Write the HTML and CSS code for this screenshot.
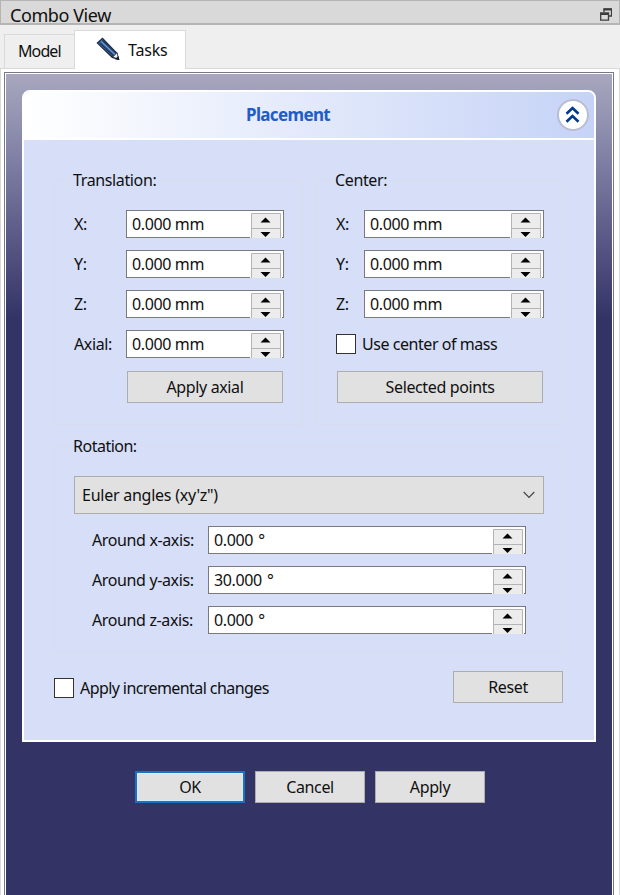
FILE: index.html
```html
<!DOCTYPE html>
<html lang="en">
<head>
<meta charset="utf-8">
<title>Combo View</title>
<link rel="stylesheet" href="styles.css">
</head>
<body>
<svg width="0" height="0" class="defs">
  <symbol id="spin" viewBox="0 0 30 25">
    <path d="M0.5 25V.5h29V25" fill="#ececec" stroke="#b4b4b4"/>
    <path d="M1 15.500h28" stroke="#b4b4b4"/>
    <path d="M14.500 4.500 19.500 9.500H9.500z"/>
    <path d="M9.500 19H19.500L14.500 24z"/>
  </symbol>
</svg>
<div class="window">
  <header class="titlebar">
    <span class="title">Combo View</span>
    <svg class="float" width="12" height="13" viewBox="0 0 12 13" fill="none" stroke="#3c3c3c">
      <path d="M4 4V1h7.500v7H9" stroke-width="1.300"/><path d="M3.500 1.500h8" stroke-width="2"/>
      <path d="M.7 5h7.800v7.200H.7z" stroke-width="1.300"/><path d="M.5 6h8" stroke-width="2"/>
    </svg>
  </header>
  <nav class="tabs">
    <div class="tab"><span class="t-model">Model</span></div>
    <div class="tab active">
      <svg width="24" height="24" viewBox="0 0 24 24">
        <path d="M6.500 .5.500 6 16 21l7 2-1.500-7z" fill="#17243c"/>
        <path d="M6.500 2 2 6.300 17 20l4-4z" fill="#3f6ca6"/>
        <path d="M5 4.300 19.500 18" stroke="#7b9fcb" stroke-width="1"/>
        <path d="M6.500 3.300 20.500 16.500M3.500 5.800 17.800 19" stroke="#1c3256" stroke-width="1.200"/>
        <path d="M16.800 20 21 15.800l1.700 6.500z" fill="#f4f4f0" stroke="#17243c" stroke-width=".7"/>
        <path d="m23.500 23-4.500-.7 3.300-3.300z" fill="#10151f"/>
      </svg>
      <span class="t-tasks">Tasks</span>
    </div>
  </nav>
  <main class="pane">
    <div class="frame">
      <section class="panel">
        <div class="head">
          <h1>Placement</h1>
          <svg class="collapse" width="34" height="34" viewBox="0 0 34 34">
            <circle cx="17" cy="17" r="15" fill="#fff" stroke="#b8bdd2" stroke-width="2"/>
            <g fill="none" stroke="#003a90" stroke-width="2.600"><path d="m10.500 15.700 6-5.700 6 5.700"/><path d="m10.500 23.700 6-5.700 6 5.700"/></g>
          </svg>
        </div>
        <div class="body">
          <div class="groups">
            <fieldset class="translation">
              <legend class="t-trans">Translation:</legend>
              <label class="row"><span>X:</span><span class="field"><span class="val">0.000 mm</span><svg class="spin"><use href="#spin"/></svg></span></label>
              <label class="row"><span>Y:</span><span class="field"><span class="val">0.000 mm</span><svg class="spin"><use href="#spin"/></svg></span></label>
              <label class="row"><span>Z:</span><span class="field"><span class="val">0.000 mm</span><svg class="spin"><use href="#spin"/></svg></span></label>
              <label class="row"><span>Axial:</span><span class="field"><span class="val">0.000 mm</span><svg class="spin"><use href="#spin"/></svg></span></label>
              <button class="btn axial"><span class="t-axial">Apply axial</span></button>
            </fieldset>
            <fieldset class="center">
              <legend class="t-center">Center:</legend>
              <label class="row"><span>X:</span><span class="field"><span class="val">0.000 mm</span><svg class="spin"><use href="#spin"/></svg></span></label>
              <label class="row"><span>Y:</span><span class="field"><span class="val">0.000 mm</span><svg class="spin"><use href="#spin"/></svg></span></label>
              <label class="row"><span>Z:</span><span class="field"><span class="val">0.000 mm</span><svg class="spin"><use href="#spin"/></svg></span></label>
              <label class="check mass"><i class="box"></i><span class="t-mass">Use center of mass</span></label>
              <button class="btn points"><span class="t-points">Selected points</span></button>
            </fieldset>
          </div>
          <fieldset class="rotation">
            <legend class="t-rot">Rotation:</legend>
            <div class="combo"><span class="t-euler">Euler angles (xy'z")</span>
              <svg width="12" height="8" viewBox="0 0 12 8"><path d="m.7 1 5.300 5.300L11.300 1" fill="none" stroke="#444" stroke-width="1.200"/></svg>
            </div>
            <label class="row"><span class="t-around">Around x-axis:</span><span class="field"><span class="val">0.000 °</span><svg class="spin"><use href="#spin"/></svg></span></label>
            <label class="row"><span class="t-around">Around y-axis:</span><span class="field"><span class="val">30.000 °</span><svg class="spin"><use href="#spin"/></svg></span></label>
            <label class="row"><span class="t-around">Around z-axis:</span><span class="field"><span class="val">0.000 °</span><svg class="spin"><use href="#spin"/></svg></span></label>
          </fieldset>
          <div class="foot">
            <label class="check"><i class="box"></i><span class="t-inc">Apply incremental changes</span></label>
            <button class="btn reset"><span class="t-reset">Reset</span></button>
          </div>
        </div>
      </section>
      <div class="actions">
        <button class="btn ok"><span>OK</span></button>
        <button class="btn"><span class="t-cancel">Cancel</span></button>
        <button class="btn"><span class="t-apply">Apply</span></button>
      </div>
    </div>
  </main>
</div>
</body>
</html>
```

FILE: styles.css
```css
* { box-sizing: border-box; }
html, body { margin: 0; height: 895px; overflow: hidden; }
body { font: 16px/20px "Noto Sans", sans-serif; letter-spacing: -.37px; color: #101010; }
.defs { display: block; }
svg { flex: none; }
span { white-space: nowrap; }
.window { width: 620px; height: 895px; display: flex; flex-direction: column; background: #efefef; }
.titlebar { height: 25px; flex: none; display: flex; justify-content: space-between; align-items: center; padding: 5px 7px 0 9px; background: #d9d9d9; border: 1px solid #b4b4b4; border-bottom-width: 2px; }
.title { font-size: 18px; letter-spacing: -.42px; }
.float { margin-top: -1px; }
.tabs { height: 43px; flex: none; display: flex; align-items: flex-end; padding-left: 4px; }
.tab { height: 34px; width: 71px; padding: 6px 0 0 13px; border: 1px solid #d9d9d9; border-bottom: 0; }
.t-model { letter-spacing: -.9px; }
.tab.active { position: relative; z-index: 1; width: 112px; height: 39px; margin: 0 0 -1px -1px; padding: 6px 0 0 21px; background: #fff; display: flex; align-items: flex-start; }
.tab.active span { margin: 3px 0 0 8px; letter-spacing: -.2px; }
.pane { flex: 1; border: 1px solid #d9d9d9; border-bottom: 0; background: #fff; padding: 3px 5px 0 3px; }
.frame { height: 100%; border: 1px solid #77778a; border-bottom: 0; padding: 17px; background: linear-gradient(#a9a8bf, #8080a5 86px, #5a5886 166px, #333366 246px) no-repeat; box-shadow: inset 1px 1px #fff, inset -1px 0 #fff; }
.panel { height: 652px; width: 574px; border: 2px solid #fff; border-radius: 8px 8px 0 0; background: #d6def8; overflow: hidden; }
.head { height: 48px; border-bottom: 2px solid #fff; background: linear-gradient(90deg, #fff, #c6d3f7); display: flex; align-items: center; padding: 0 4px 0 222px; justify-content: space-between; }
h1 { margin: 0; font-size: 17px; line-height: 22px; color: #215dc6; letter-spacing: -.65px; }
.body { padding: 30px 31px 0 30px; }
fieldset { margin: 0; min-width: 0; border: 1px solid #d9dcea; padding: 20px 0 0 18px; }
legend { padding: 0 2px; margin-left: -2px; height: 20px; }
.groups { display: flex; gap: 13px; height: 255px; margin-bottom: 11px; }
.groups fieldset { height: 255px; }
.groups fieldset .row > span:first-child { padding-left: 1px; }
.translation { width: 249px; }
.center { width: 247px; }
.row { display: flex; justify-content: space-between; align-items: center; height: 28px; margin-bottom: 12px; padding-right: 18px; }
.field { display: flex; justify-content: space-between; width: 158px; height: 28px; padding: 2px 2px 0 5px; background: #fff; border: 1px solid #7a7a7a; }
.field .val { padding-top: 1px; }
.spin { width: 30px; height: 25px; margin-bottom: -1px; box-shadow: 1px 0 #fff, -1px 0 #fff; }
.center .field { width: 180px; }
.btn { display: block; width: 110px; height: 32px; padding: 0; background: #e1e1e1; border: 1px solid #adadad; font: inherit; letter-spacing: inherit; color: inherit; }
.axial { width: 156px; margin: 13px 0 0 54px; }
.points { width: 206px; margin: 13px 0 0 2px; }
.check { display: flex; align-items: center; gap: 6px; height: 28px; }
.mass { padding-left: 1px; letter-spacing: -.45px; }
.box { width: 20px; height: 20px; background: #fff; border: 1px solid #333; }
.rotation { height: 217px; padding: 20px 18px 0 18px; }
.t-rot { letter-spacing: -.5px; }
.t-euler { letter-spacing: -.25px; }
.combo { display: flex; align-items: center; justify-content: space-between; width: 470px; height: 38px; padding: 0 8px 0 7px; margin: 0 0 12px 1px; background: #e1e1e1; border: 1px solid #adadad; }
.rotation .row { padding: 0 18px 0 19px; }
.rotation .field { width: 318px; }
.rotation .val { word-spacing: 1.500px; }
.foot { display: flex; justify-content: space-between; align-items: flex-start; padding-top: 18px; }
.foot .check { height: 34px; letter-spacing: -.58px; }
.actions { display: flex; gap: 10px; padding: 29px 0 0 113px; }
.ok { border: 2px solid #1f6fc0; box-shadow: inset 0 0 0 1px #d3efff; }
```
